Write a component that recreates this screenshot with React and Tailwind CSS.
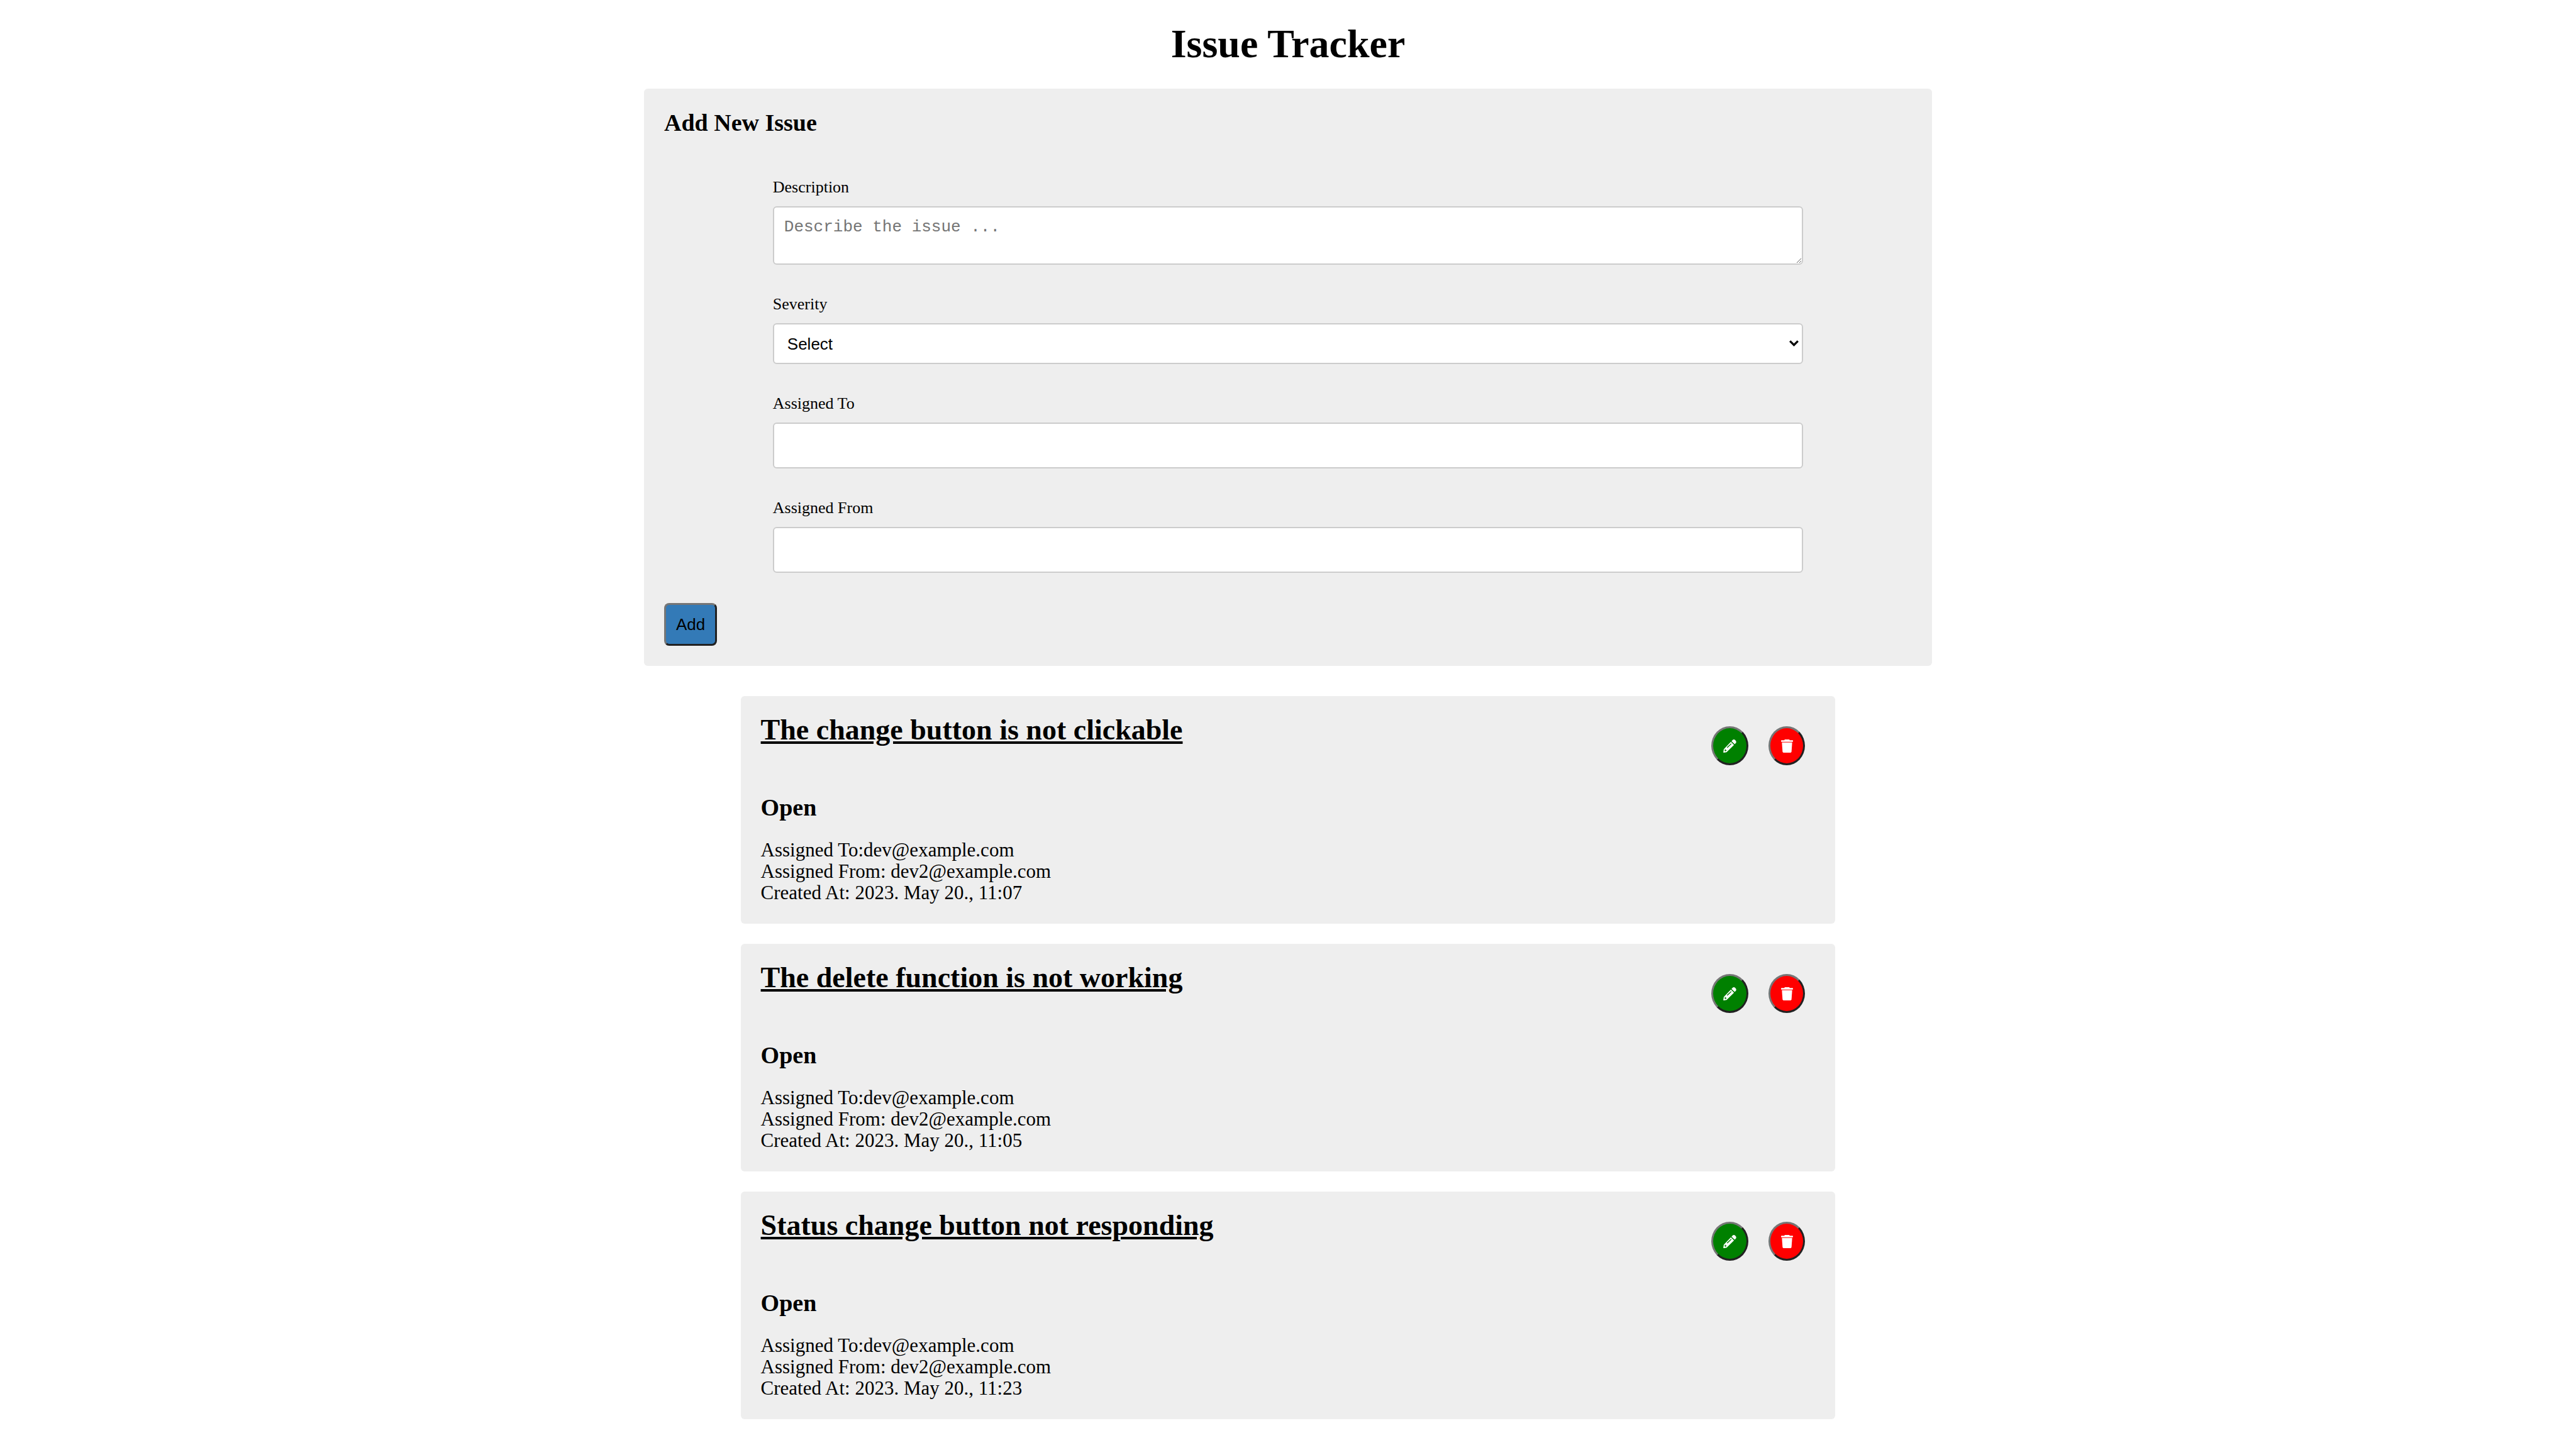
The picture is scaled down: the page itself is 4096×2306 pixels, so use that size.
import React from "react";

const issues = [
  { title: "The change button is not clickable", to: "dev@example.com", from: "dev2@example.com", at: "2023. May 20., 11:07" },
  { title: "The delete function is not working", to: "dev@example.com", from: "dev2@example.com", at: "2023. May 20., 11:05" },
  { title: "Status change button not responding", to: "dev@example.com", from: "dev2@example.com", at: "2023. May 20., 11:23" },
];

function PencilIcon() {
  return (
    <svg viewBox="0 0 79 80" className="size-[21px]" fill="#fff" aria-hidden="true">
      <path
        fillRule="evenodd"
        d="M46 14 65 33 20 77 3 80Q0 80 0 77L3 59ZM47 24 22 47 25 51 50 28ZM11 57 8 68 12 72 22 65 15 64Z"
      />
      <path d="M50 10 57 3Q65 -3 73 5 82 13 76 22L69 29Z" />
    </svg>
  );
}

function TrashIcon() {
  return (
    <svg viewBox="0 0 72 79" className="h-[21px] w-[19px]" fill="#fff" aria-hidden="true">
      <path d="M23 0H48Q51 0 52 4H69Q72 4 72 7V11Q72 14 69 14H3Q0 14 0 11V7Q0 4 3 4H20Q21 0 23 0Z" />
      <path d="M5 18H67L63 73Q62 79 57 79H15Q10 79 9 73Z" />
    </svg>
  );
}

const controlBorder = "border-2 border-[#ccc] rounded-md bg-white";
const outset = "border-3 border-t-[#767676] border-l-[#767676] border-r-[#212121] border-b-[#212121]";

function Field({ id, label, children }) {
  return (
    <div className="mb-12 flex flex-col">
      <label htmlFor={id} className="mb-4 text-[26px] leading-[29px]">
        {label}
      </label>
      {children}
    </div>
  );
}

function IssueForm() {
  return (
    <form className="rounded-md bg-[#eee] py-8" onSubmit={(e) => e.preventDefault()}>
      <h2 className="mx-8 mb-[66px] text-[38px] leading-[44px] font-bold">Add New Issue</h2>
      <div className="mx-auto w-4/5">
        <Field id="description" label="Description">
          <textarea
            id="description"
            placeholder="Describe the issue ..."
            className={`${controlBorder} h-[93px] resize p-4 font-['Liberation_Mono',monospace] text-[26px] leading-[31px] placeholder:text-[#757575]`}
          />
        </Field>
        <Field id="severity" label="Severity">
          <div className="relative">
            <select
              id="severity"
              className={`${controlBorder} block h-[65px] w-full appearance-none pl-[21px] font-['Liberation_Sans',sans-serif] text-[26px] leading-[30px]`}
            >
              <option>Select</option>
            </select>
            <svg
              viewBox="0 0 18 12"
              className="pointer-events-none absolute top-[27px] right-[7px] h-[10px] w-[15px]"
              aria-hidden="true"
            >
              <path d="M1.4 1.6 9 9.2 16.6 1.6" fill="none" stroke="#000" strokeWidth="3.8" />
            </svg>
          </div>
        </Field>
        <Field id="assigned-to" label="Assigned To">
          <input id="assigned-to" type="text" className={`${controlBorder} h-[73px] p-4 text-[26px]`} />
        </Field>
        <Field id="assigned-from" label="Assigned From">
          <input id="assigned-from" type="text" className={`${controlBorder} h-[73px] p-4 text-[26px]`} />
        </Field>
      </div>
      <button
        type="submit"
        className={`${outset} mx-8 block h-[68px] rounded-lg bg-[#337ab7] px-4 font-['Liberation_Sans',sans-serif] text-[26px] leading-[30px]`}
      >
        Add
      </button>
    </form>
  );
}

function IssueCard({ issue }) {
  return (
    <article className="rounded-md bg-[#eee] px-8 pt-7 pb-8">
      <header className="mb-[46px] flex items-start justify-between">
        <h2 className="text-[46px] leading-[51px] font-bold">
          <a href="#" className="underline">
            {issue.title}
          </a>
        </h2>
        <div className="mt-5 mr-4 flex gap-8">
          <button
            type="button"
            aria-label="Edit issue"
            className={`${outset} flex h-[62px] w-[59px] items-center justify-center rounded-[50%] bg-[#008000]`}
          >
            <PencilIcon />
          </button>
          <button
            type="button"
            aria-label="Delete issue"
            className={`${outset} flex h-[62px] w-[58px] items-center justify-center rounded-[50%] bg-[#ff0000]`}
          >
            <TrashIcon />
          </button>
        </div>
      </header>
      <h3 className="mb-[30px] text-[38px] leading-[42px] font-bold">Open</h3>
      <div className="text-[31px] leading-[34px]">
        <p>Assigned To:{issue.to}</p>
        <p>Assigned From: {issue.from}</p>
        <p>Created At: {issue.at}</p>
      </div>
    </article>
  );
}

export default function App() {
  return (
    <main className="mx-auto w-1/2 font-['Liberation_Serif',serif] text-black">
      <h1 className="pt-[34px] pb-9 text-center text-[64px] leading-[71px] font-bold">Issue Tracker</h1>
      <IssueForm />
      <section className="mx-auto mt-12 flex w-[85%] flex-col gap-8">
        {issues.map((issue) => (
          <IssueCard key={issue.title} issue={issue} />
        ))}
      </section>
    </main>
  );
}
